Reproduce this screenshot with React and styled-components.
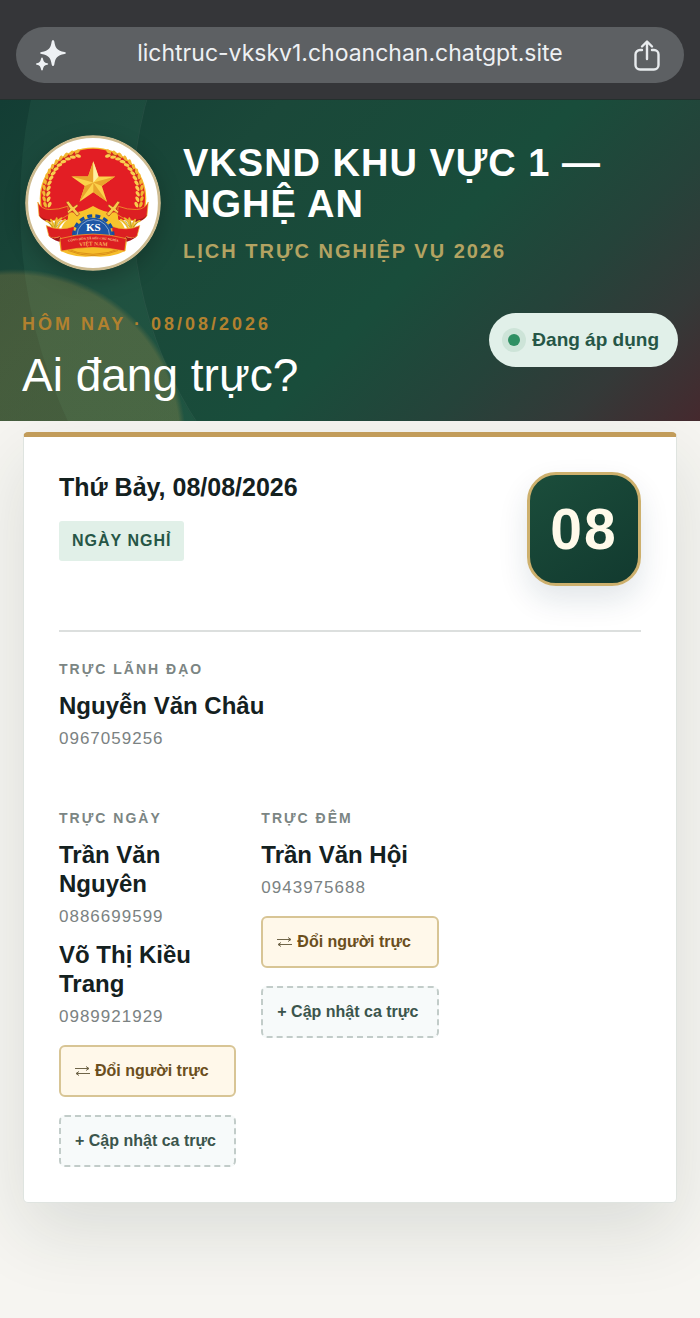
import React from "react";
import styled, { createGlobalStyle } from "styled-components";

const shifts = [
  {
    label: "TRỰC LÃNH ĐẠO",
    wide: true,
    people: [{ name: "Nguyễn Văn Châu", phone: "0967059256" }]
  },
  {
    label: "TRỰC NGÀY",
    people: [
      { name: "Trần Văn Nguyên", phone: "0886699599" },
      { name: "Võ Thị Kiều Trang", phone: "0989921929" }
    ]
  },
  {
    label: "TRỰC ĐÊM",
    people: [{ name: "Trần Văn Hội", phone: "0943975688" }]
  }
];

// grains along the left arc of the emblem, the right side is mirrored
const grains = [
  [95, 238, 0], [92, 221, 2], [91, 204, 5], [92, 187, 8], [95, 170, 14],
  [100, 154, 20], [107, 139, 27], [116, 125, 35], [127, 112, 43],
  [140, 101, 52], [155, 92, 61], [171, 86, 70], [188, 82, 78]
];

function Wheat() {
  return (
    <g>
      {grains.map(([x, y, turn]) => (
        <g key={y} transform={`translate(${x} ${y}) rotate(${turn})`}>
          <ellipse cx="-6" cy="0" rx="5" ry="9" transform="rotate(-28 -6 0)" fill="#f3b632" />
          <ellipse cx="7" cy="0" rx="5" ry="9" transform="rotate(28 7 0)" fill="#f9ce4e" />
          <path d="M0 -7V7" stroke="#a8451a" strokeWidth="2" />
        </g>
      ))}
    </g>
  );
}

function RibbonSide() {
  return (
    <g>
      <path d="M66 230Q76 252 102 253Q130 254 158 243L161 268Q130 290 98 286Q76 284 70 272Z" fill="#dc1f22" stroke="#f3bb2e" strokeWidth="2" />
      <path d="M70 270Q84 286 110 284L104 292Q80 290 70 270Z" fill="#a81519" />
      <path d="M166 278Q148 286 138 310L170 318Z" fill="#f5c431" />
      <path d="M92 288Q104 290 112 308M106 284Q114 294 116 310M124 280Q118 296 120 310M138 280Q122 290 120 312M150 284Q132 296 126 314" fill="none" stroke="#ecb92c" strokeWidth="6" strokeLinecap="round" />
      <path d="M98 292l14 14M120 290l-2 18M136 288l-14 20" stroke="#8f8a22" strokeWidth="2" />
      <path d="M92 302Q132 321 178 304L174 346Q140 348 132 336Q112 345 100 334Z" fill="#dc1f22" stroke="#f3bb2e" strokeWidth="2" />
      <path d="M100 334Q116 346 134 336L140 352Q118 351 100 334Z" fill="#a81519" />
      <path d="M152 230l8-3 14 18 12-8 4 5-10 9 14 16-8 6-14-16-12 8-4-5 9-9Z" fill="#f7cb4a" stroke="#b5311b" strokeWidth="2" />
    </g>
  );
}

function Emblem() {
  return (
    <EmblemSvg viewBox="27 25 416 416" role="img" aria-label="Phù hiệu VKSND">
      <circle cx="235" cy="233" r="203" fill="#fff" stroke="#cdbb90" strokeWidth="9" />
      <ellipse cx="235" cy="219" rx="163" ry="156" fill="#f4bb2c" />
      <ellipse cx="235" cy="219" rx="159" ry="152" fill="#e31e24" />
      <path d="M80 286L390 286L376 360Q330 394 235 392Q140 394 94 360Z" fill="#fff" />
      <Wheat />
      <g transform="translate(470 0) scale(-1 1)">
        <Wheat />
      </g>
      <path d="M160 260Q190 268 235 242Q280 268 310 260L314 302L300 340L170 340L156 302Z" fill="#f8c42c" />
      <path d="M132 352L338 352L334 380Q290 402 235 396Q180 402 136 380Z" fill="#f6bd2b" />
      <path d="M142 368Q235 412 328 368" fill="none" stroke="#d99017" strokeWidth="3" />
      <path d="M158 378Q235 410 312 378" fill="none" stroke="#d99017" strokeWidth="3" />
      <RibbonSide />
      <g transform="translate(470 0) scale(-1 1)">
        <RibbonSide />
      </g>
      <path d="M176 332A60 60 0 0 1 296 332" fill="none" stroke="#174e9c" strokeWidth="10" strokeDasharray="15 10" />
      <path d="M178 336A58 58 0 0 1 294 336Z" fill="#1d56a5" />
      <path d="M186 334A50 50 0 0 1 286 334" fill="none" stroke="#b9cce8" strokeWidth="2" />
      <path d="M134 342Q235 314 337 342L332 380Q235 358 138 380Z" fill="#dc1f22" stroke="#f3bb2e" strokeWidth="2" />
      <path id="ribbon-top" d="M150 354Q235 334 322 354" fill="none" />
      <path id="ribbon-bottom" d="M150 372Q235 354 322 372" fill="none" />
      <EmblemText x="236" y="318" fontSize="34" fill="#fff">KS</EmblemText>
      <EmblemText fontSize="10" fill="#f9c98e">
        <textPath href="#ribbon-top" startOffset="50%">CỘNG HÒA XÃ HỘI CHỦ NGHĨA</textPath>
      </EmblemText>
      <EmblemText fontSize="17" fill="#f9b25a">
        <textPath href="#ribbon-bottom" startOffset="50%">VIỆT NAM</textPath>
      </EmblemText>
      <path d="M236 105L252 152L303 152L262 181L278 229L236 200L194 229L210 181L169 152L220 152Z" fill="#fbd24a" />
      <path d="M236 105L236 170L220 152ZM303 152L236 170L262 181ZM278 229L236 170L236 200ZM194 229L236 170L210 181ZM169 152L236 170L220 152Z" fill="#e9a52c" />
      <path d="M236 105L236 170L252 152Z" fill="#fff0a3" />
    </EmblemSvg>
  );
}

function SparkleIcon() {
  return (
    <svg width="30" height="32" viewBox="0 0 30 32" fill="#eef1f4" aria-hidden="true">
      <path d="M17 1Q18 1 18.300 2.500C19.500 9.500 21 11.500 28.500 13Q30 13.300 30 14Q30 14.700 28.500 15C21 16.500 19.500 18.500 18.300 25.500Q18 27 17 27Q16 27 15.700 25.500C14.500 18.500 13 16.500 5.500 15Q4 14.700 4 14Q4 13.300 5.500 13C13 11.500 14.500 9.500 15.700 2.500Q16 1 17 1Z" />
      <path d="M6 18.500Q6.600 18.500 6.900 19.500C7.600 22.800 8.300 23.600 11.200 24.200Q12.200 24.500 12.200 25Q12.200 25.500 11.200 25.800C8.300 26.400 7.600 27.200 6.900 30.500Q6.600 31.500 6 31.500Q5.400 31.500 5.100 30.500C4.400 27.200 3.700 26.400 0.800 25.800Q0 25.500 0 25Q0 24.500 0.800 24.200C3.700 23.600 4.400 22.800 5.100 19.500Q5.400 18.500 6 18.500Z" />
    </svg>
  );
}

function ShareIcon() {
  return (
    <svg width="26" height="32" viewBox="0 0 26 32" fill="none" stroke="#e8ebee" strokeWidth="2.400" strokeLinecap="round" strokeLinejoin="round" aria-hidden="true">
      <path d="M8 11H6a4.500 4.500 0 0 0-4.500 4.500v10.500a4.500 4.500 0 0 0 4.500 4.500h14a4.500 4.500 0 0 0 4.500-4.500V15.500a4.500 4.500 0 0 0-4.500-4.500h-2" />
      <path d="M13 20V3M8 7.500l5-5 5 5" />
    </svg>
  );
}

function SwapIcon() {
  return (
    <svg width="15" height="10" viewBox="0 0 15 10" fill="none" stroke="#6f6548" aria-hidden="true">
      <path d="M0 2.500h14M11 0.500l3 2-3 2M15 7.500H1M4 5.500l-3 2 3 2" />
    </svg>
  );
}

function Shift({ shift }) {
  return (
    <ShiftBlock $wide={shift.wide}>
      <ShiftLabel>{shift.label}</ShiftLabel>
      <People>
        {shift.people.map(person => (
          <li key={person.phone}>
            <PersonName>{person.name}</PersonName>
            <Phone href={`tel:${person.phone}`}>{person.phone}</Phone>
          </li>
        ))}
      </People>
      {!shift.wide && (
        <Actions>
          <SwapButton type="button">
            <SwapIcon />
            Đổi người trực
          </SwapButton>
          <UpdateButton type="button">+ Cập nhật ca trực</UpdateButton>
        </Actions>
      )}
    </ShiftBlock>
  );
}

function App() {
  return (
    <Page>
      <GlobalStyle />
      <BrowserBar>
        <AddressPill>
          <IconButton type="button" aria-label="Trợ lý">
            <SparkleIcon />
          </IconButton>
          <Address type="text" aria-label="Địa chỉ" readOnly value="lichtruc-vkskv1.choanchan.chatgpt.site" />
          <IconButton type="button" aria-label="Chia sẻ">
            <ShareIcon />
          </IconButton>
        </AddressPill>
      </BrowserBar>
      <Hero>
        <Brand>
          <Emblem />
          <div>
            <BrandTitle>VKSND KHU VỰC 1 — NGHỆ AN</BrandTitle>
            <BrandSub>LỊCH TRỰC NGHIỆP VỤ 2026</BrandSub>
          </div>
        </Brand>
        <TodayRow>
          <div>
            <TodayLabel>HÔM NAY · 08/08/2026</TodayLabel>
            <Question>Ai đang trực?</Question>
          </div>
          <Status>
            <StatusDot />
            Đang áp dụng
          </Status>
        </TodayRow>
      </Hero>
      <Main>
        <Card>
          <CardHead>
            <div>
              <CardDate>Thứ Bảy, 08/08/2026</CardDate>
              <DayTag>NGÀY NGHỈ</DayTag>
            </div>
            <DayNumber>08</DayNumber>
          </CardHead>
          <Shifts>
            {shifts.map(shift => (
              <Shift key={shift.label} shift={shift} />
            ))}
          </Shifts>
        </Card>
      </Main>
    </Page>
  );
}

const GlobalStyle = createGlobalStyle`
  *, *::before, *::after {
    box-sizing: border-box;
  }
  body {
    margin: 0;
    background: #f6f5f1;
    font-family: "Liberation Sans", Arial, sans-serif;
    color: #14211f;
  }
  h1, h2, h3, p, ul {
    margin: 0;
    padding: 0;
  }
  button, input {
    font-family: inherit;
  }
`;

const Page = styled.div`
  min-height: 100vh;
  display: flex;
  flex-direction: column;
`;

const BrowserBar = styled.div`
  padding: 27px 16px 16px;
  background: #353639;
  border-bottom: 1px solid #23302d;
`;

const AddressPill = styled.div`
  display: flex;
  align-items: center;
  height: 56px;
  padding: 0 24px 0 20px;
  border-radius: 28px;
  background: #5d6063;
`;

const IconButton = styled.button`
  display: flex;
  flex: none;
  padding: 0;
  border: 0;
  background: none;
`;

const Address = styled.input`
  flex: 1;
  min-width: 0;
  padding: 0 0 4px;
  border: 0;
  background: none;
  color: #eef0f3;
  font-family: Inter, "Noto Sans", sans-serif;
  font-size: 23px;
  text-align: center;
`;

const Hero = styled.header`
  position: relative;
  overflow: hidden;
  padding: 35px 22px 18px;
  background:
    radial-gradient(circle at 14px 341px, rgba(170, 140, 70, 0.3) 166px, transparent 172px),
    linear-gradient(135deg, #133d34 0%, #1a4839 28%, #194d3b 57%, #25433a 74%, #343938 87%, #45292e 100%);

  /* large faint ring behind the brand */
  &::before {
    content: "";
    position: absolute;
    top: -295px;
    left: 132px;
    width: 800px;
    height: 800px;
    border: 1px solid rgba(255, 255, 255, 0.06);
    border-radius: 50%;
    box-shadow: 0 0 0 112px rgba(150, 255, 200, 0.05);
  }
`;

const Brand = styled.div`
  position: relative;
  display: flex;
  align-items: center;
  gap: 22px;
  padding-left: 3px;
`;

const EmblemSvg = styled.svg`
  flex: none;
  width: 136px;
  height: 136px;
  border-radius: 50%;
  box-shadow: 0 8px 22px rgba(0, 0, 0, 0.22);
`;

const EmblemText = styled.text`
  font-family: "Liberation Serif", serif;
  font-weight: 700;
  text-anchor: middle;
`;

const BrandTitle = styled.h1`
  color: #fff;
  font-size: 38px;
  line-height: 41px;
  letter-spacing: 1px;
`;

const BrandSub = styled.p`
  margin-top: 14px;
  color: #b3a362;
  font-size: 20px;
  font-weight: 700;
  line-height: 24px;
  letter-spacing: 2px;
`;

const TodayRow = styled.div`
  position: relative;
  display: flex;
  justify-content: space-between;
  align-items: flex-start;
  margin-top: 42px;
`;

const TodayLabel = styled.p`
  color: #b2812f;
  font-size: 18px;
  font-weight: 700;
  line-height: 22px;
  letter-spacing: 3px;
`;

const Question = styled.h2`
  margin-top: 12px;
  color: #fff;
  font-size: 46px;
  font-weight: 400;
  line-height: 56px;
`;

const Status = styled.p`
  display: flex;
  align-items: center;
  gap: 12px;
  height: 54px;
  padding: 0 19px;
  border-radius: 27px;
  background: #e1f0e9;
  color: #265646;
  font-size: 19px;
  font-weight: 700;
`;

const StatusDot = styled.span`
  width: 12px;
  height: 12px;
  border-radius: 50%;
  background: #2f8f63;
  box-shadow: 0 0 0 6px #cde4d8;
`;

const Main = styled.main`
  flex: 1;
  padding: 11px 23px 115px;
`;

const Card = styled.section`
  padding: 35px;
  border: 1px solid #dfe4e0;
  border-top: 5px solid #c29c5a;
  border-radius: 5px;
  background: #fff;
  box-shadow: 0 28px 72px rgba(25, 50, 40, 0.12);
`;

const CardHead = styled.div`
  display: flex;
  justify-content: space-between;
  align-items: flex-start;
  padding-bottom: 44px;
  border-bottom: 2px solid #dcdfde;
`;

const CardDate = styled.h2`
  font-size: 25px;
  line-height: 30px;
`;

const DayTag = styled.p`
  display: inline-block;
  margin-top: 19px;
  padding: 0 13px;
  border-radius: 3px;
  background: #e1f0e8;
  color: #265646;
  font-size: 16px;
  font-weight: 700;
  line-height: 40px;
  letter-spacing: 1px;
`;

const DayNumber = styled.div`
  display: flex;
  flex: none;
  justify-content: center;
  align-items: center;
  width: 114px;
  height: 114px;
  border: 3px solid #cdb06d;
  border-radius: 29px;
  background: linear-gradient(145deg, #1b4d3b, #123a2f);
  box-shadow: 0 14px 30px rgba(20, 50, 70, 0.12);
  color: #fffaea;
  font-size: 57px;
  font-weight: 700;
  letter-spacing: 2px;
`;

const Shifts = styled.div`
  display: grid;
  grid-template-columns: repeat(3, 1fr);
  gap: 58px 25px;
  padding-top: 27px;
`;

const ShiftBlock = styled.section`
  grid-column: ${({ $wide }) => ($wide ? "1 / -1" : "auto")};
`;

const ShiftLabel = styled.p`
  margin-bottom: 12px;
  color: #7b8583;
  font-size: 14px;
  font-weight: 700;
  line-height: 20px;
  letter-spacing: 2px;
`;

const People = styled.ul`
  display: flex;
  flex-direction: column;
  gap: 12px;
  list-style: none;
`;

const PersonName = styled.h3`
  margin-bottom: 8px;
  font-size: 24px;
  line-height: 29px;
`;

const Phone = styled.a`
  display: block;
  color: #7b8282;
  font-size: 17px;
  line-height: 22px;
  letter-spacing: 1px;
  text-decoration: none;
`;

const Actions = styled.div`
  display: flex;
  flex-direction: column;
  gap: 18px;
  margin-top: 17px;
`;

const ActionButton = styled.button`
  display: flex;
  align-items: center;
  gap: 5px;
  height: 52px;
  padding: 0 14px;
  border-radius: 6px;
  font-size: 16px;
  font-weight: 700;
  white-space: nowrap;
`;

const SwapButton = styled(ActionButton)`
  border: 2px solid #d8c595;
  background: #fff8ea;
  color: #6b4f1d;
`;

const UpdateButton = styled(ActionButton)`
  border: 2px dashed #c2ccc9;
  background: #f7fafa;
  color: #3b554c;
`;

export default App;
